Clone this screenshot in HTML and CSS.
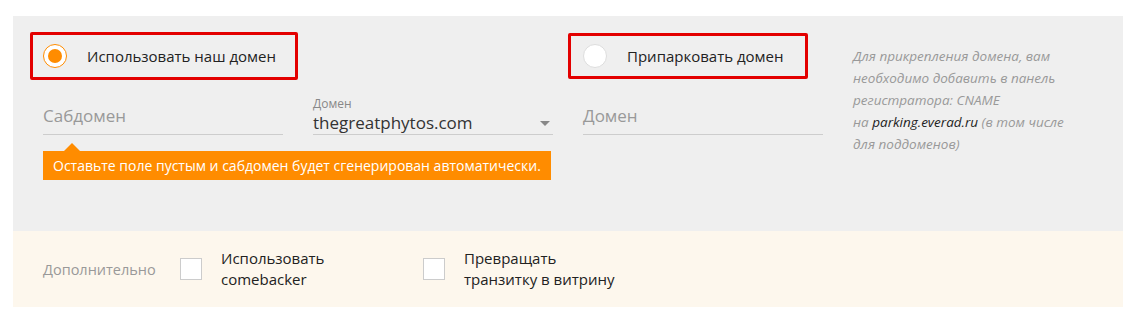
FILE: index.html
```html
<!DOCTYPE html>
<html lang="ru">
<head>
    <meta charset="UTF-8">
    <title>Домен</title>
    <link rel="stylesheet" href="styles.css">
</head>
<body>
    <div class="panel">
        <div class="domain-block">
            <div class="col-own">
                <label class="choice">
                    <span class="radio checked"></span>
                    <span>Использовать наш домен</span>
                </label>
                <div class="fields">
                    <div class="field">
                        <span class="placeholder">Сабдомен</span>
                    </div>
                    <div class="field select">
                        <span class="small-label">Домен</span>
                        <span class="value">thegreatphytos.com</span>
                        <span class="caret"></span>
                    </div>
                </div>
                <div class="hint">Оставьте поле пустым и сабдомен будет сгенерирован автоматически.</div>
            </div>
            <div class="col-park">
                <label class="choice park">
                    <span class="radio"></span>
                    <span>Припарковать домен</span>
                </label>
                <div class="fields">
                    <div class="field">
                        <span class="placeholder">Домен</span>
                    </div>
                </div>
            </div>
            <p class="note">
                Для прикрепления домена, вам необходимо добавить в панель регистратора: CNAME<br>
                на <b>parking.everad.ru</b> (в том числе для поддоменов)
            </p>
        </div>
        <div class="extra">
            <span class="extra-title">Дополнительно</span>
            <label class="check">
                <span class="box"></span>
                <span>Использовать<br>comebacker</span>
            </label>
            <label class="check">
                <span class="box"></span>
                <span>Превращать<br>транзитку в витрину</span>
            </label>
        </div>
    </div>
</body>
</html>
```

FILE: styles.css
```css
body {
    margin: 0;
    padding: 16px 23px 19px 13px;
    background-color: #fff;
    font-family: "Open Sans", Arial, sans-serif;
    color: #222;
}

.panel {
    width: 1110px;
}

.domain-block {
    display: flex;
    background-color: #efefef;
    padding: 16px 0 0 17px;
    height: 199px;
}

.col-own {
    width: 538px;
}

.col-park {
    width: 255px;
}

.choice {
    display: flex;
    align-items: center;
    box-sizing: border-box;
    width: 268px;
    height: 48px;
    padding-left: 10px;
    border: 3px solid #e30000;
    border-radius: 2px;
    font-size: 15px;
    color: #222;
}

.choice.park {
    width: 240px;
    height: 46px;
    margin-top: 1px;
    padding-left: 12px;
}

.radio {
    box-sizing: border-box;
    width: 24px;
    height: 24px;
    border-radius: 50%;
    background-color: #fff;
    border: 1px solid #ddd;
    margin-right: 20px;
    display: flex;
    align-items: center;
    justify-content: center;
}

.radio.checked {
    border-color: #ff8c00;
}

.radio.checked::after {
    content: "";
    width: 14px;
    height: 14px;
    border-radius: 50%;
    background-color: #ff8c00;
}

.fields {
    display: flex;
    gap: 30px;
    margin: 16px 0 0 13px;
}

.col-park .fields {
    margin: 17px 0 0 15px;
}

.field {
    position: relative;
    width: 240px;
    height: 38px;
    border-bottom: 1px solid #cdcdcd;
}

.placeholder {
    display: block;
    padding-top: 8px;
    line-height: 24px;
    font-size: 17px;
    color: #999;
}

.small-label {
    display: block;
    font-size: 12px;
    line-height: 16px;
    color: #888;
}

.value {
    display: block;
    font-size: 17px;
    line-height: 22px;
    color: #333;
}

.caret {
    position: absolute;
    right: 3px;
    top: 25px;
    border-left: 5px solid transparent;
    border-right: 5px solid transparent;
    border-top: 5px solid #888;
}

.hint {
    position: relative;
    display: inline-block;
    margin: 16px 0 0 13px;
    padding: 0 10px;
    line-height: 29px;
    background-color: #ff8c00;
    color: #fff;
    font-size: 14px;
}

.hint::before {
    content: "";
    position: absolute;
    left: 21px;
    top: -8px;
    border-left: 8px solid transparent;
    border-right: 8px solid transparent;
    border-bottom: 8px solid #ff8c00;
}

.note {
    width: 222px;
    margin: 13px 0 0 30px;
    font-size: 13.5px;
    line-height: 22px;
    font-style: italic;
    color: #999;
}

.note b {
    font-weight: normal;
    color: #222;
}

.extra {
    display: flex;
    align-items: center;
    height: 76px;
    padding-left: 30px;
    background-color: #fdf7ed;
}

.extra-title {
    width: 137px;
    font-size: 14.5px;
    color: #999;
}

.check {
    display: flex;
    align-items: center;
    width: 243px;
    font-size: 15px;
    line-height: 21px;
    color: #222;
}

.box {
    box-sizing: border-box;
    width: 22px;
    height: 22px;
    background-color: #fff;
    border: 1px solid #ccc;
    margin-right: 19px;
}
```
